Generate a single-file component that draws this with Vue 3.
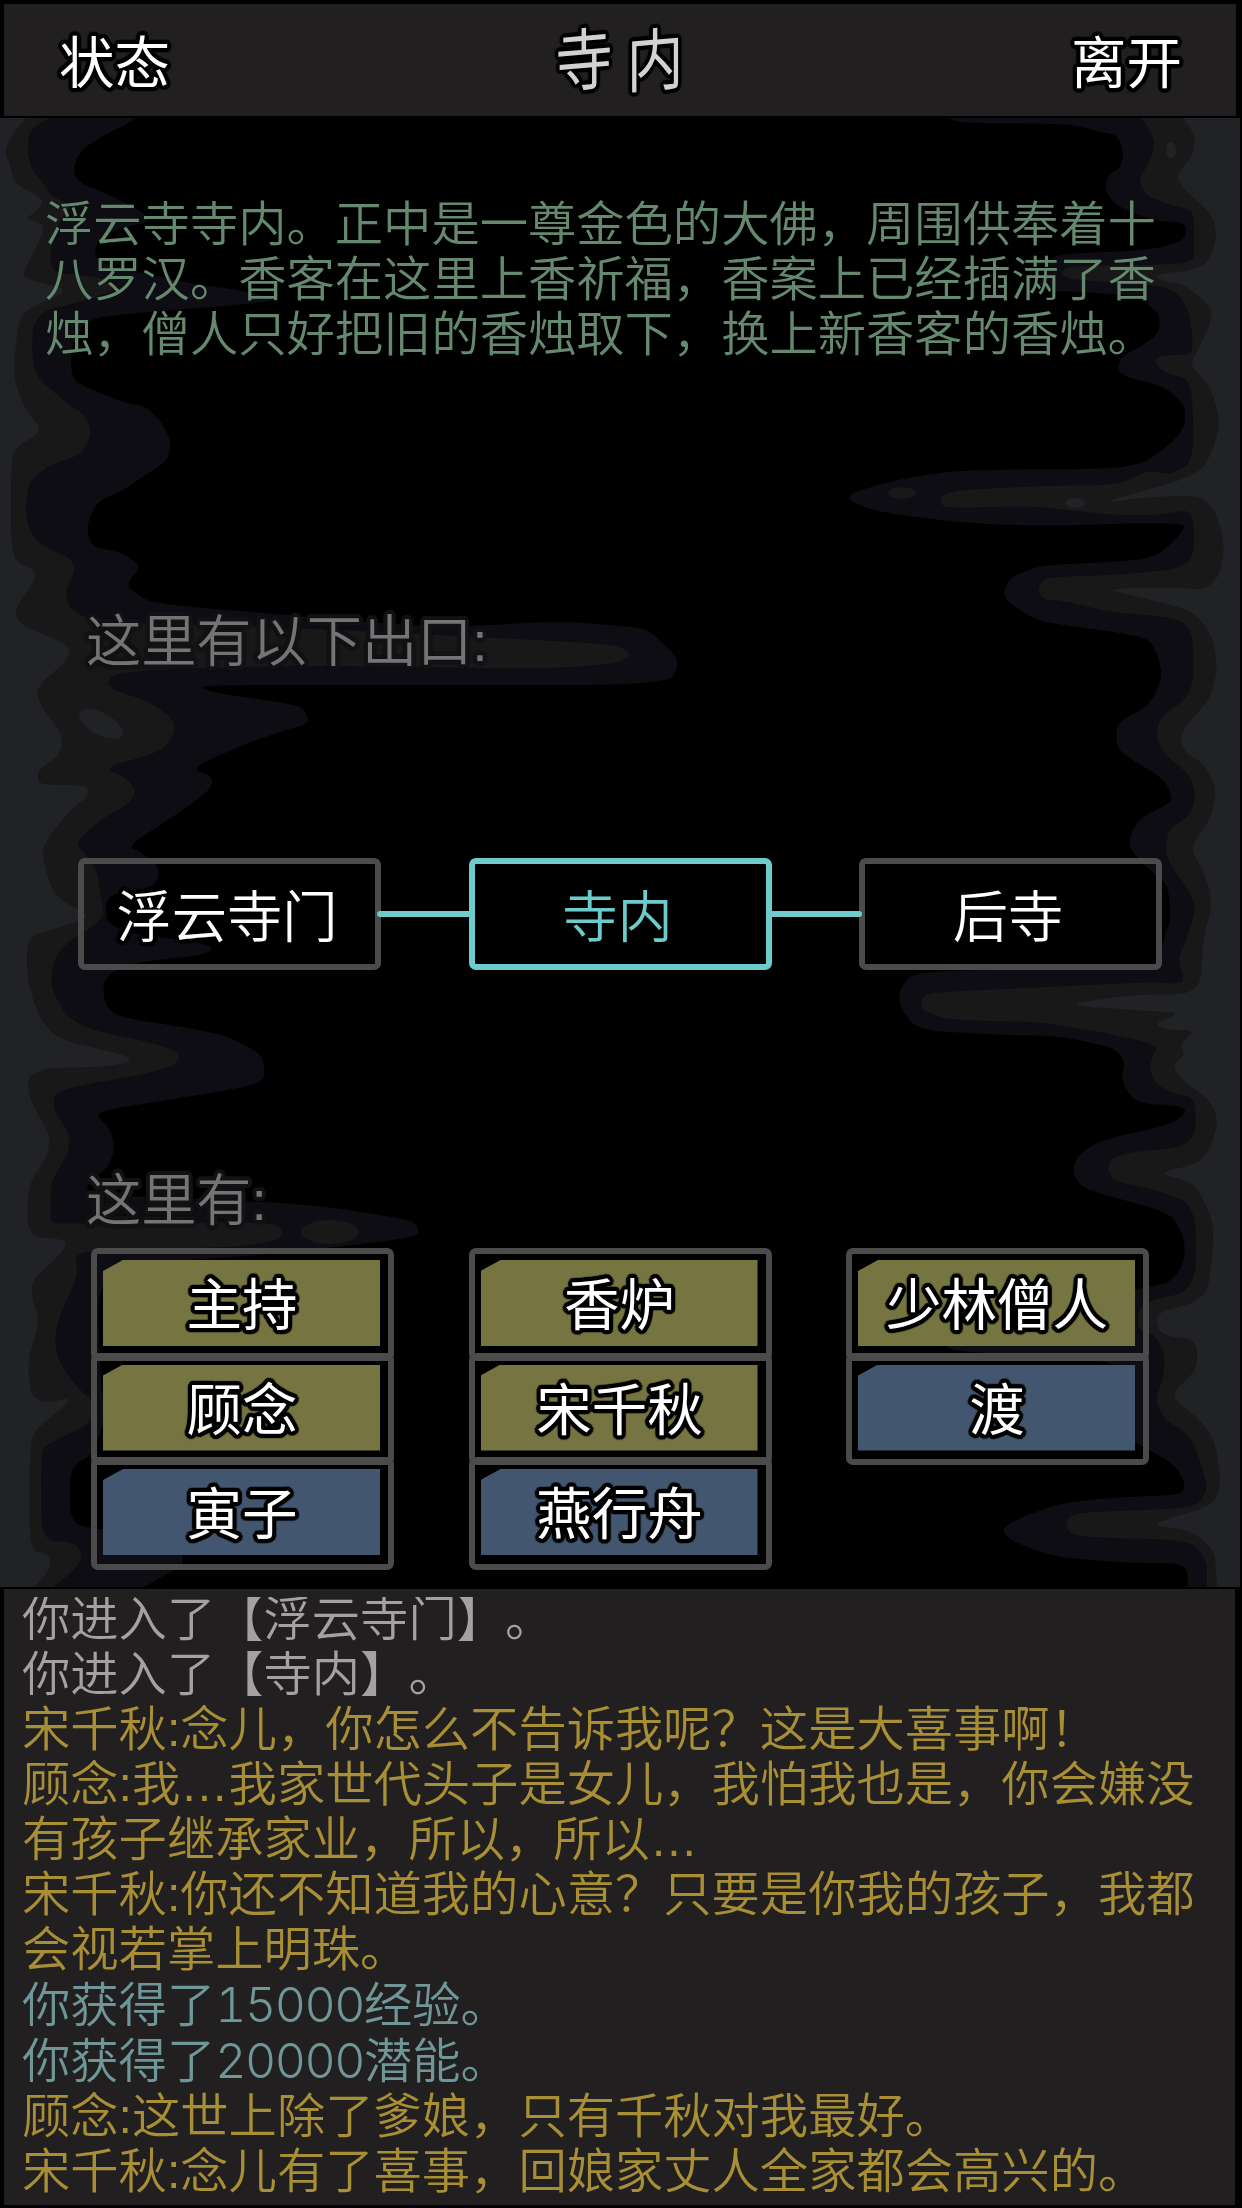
<template>
  <div class="game">
    <header class="topbar">
      <button class="topbar-btn outlined">状态</button>
      <h1 class="topbar-title outlined">
        <span v-for="char in title" :key="char" class="topbar-char">{{ char }}</span>
      </h1>
      <button class="topbar-btn outlined">离开</button>
    </header>

    <main class="scene">
      <svg class="scene-bg" viewBox="0 118 1242 1469" preserveAspectRatio="none">
        <path v-for="(shape, i) in shapes" :key="i" :d="shape.d" :fill="shape.fill" />
        <ellipse cx="330" cy="1232" rx="29" ry="12" fill="#181819" />
        <ellipse cx="101" cy="724" rx="24" ry="11" fill="#202225" transform="rotate(28 101 724)" />
        <ellipse cx="902" cy="493" rx="14" ry="6" fill="#181819" />
        <ellipse cx="1075" cy="503" rx="10" ry="5" fill="#202225" />
        <ellipse cx="1171" cy="150" rx="5" ry="8" fill="#202225" />
      </svg>

      <p class="description">{{ description }}</p>

      <h2 class="label label-exits">这里有以下出口:</h2>
      <nav class="exits">
        <template v-for="(exit, i) in exits" :key="exit.name">
          <span v-if="i > 0" class="link"></span>
          <button class="exit outlined" :class="{ current: exit.current }">{{ exit.name }}</button>
        </template>
      </nav>

      <h2 class="label label-people">这里有:</h2>
      <div class="people">
        <div v-for="(column, i) in people" :key="i" class="column">
          <div v-for="person in column" :key="person.name" class="cell">
            <button class="person" :class="person.type">
              <span class="outlined">{{ person.name }}</span>
            </button>
          </div>
        </div>
      </div>
    </main>

    <section class="log">
      <div class="log-view">
        <p v-for="(line, i) in log" :key="i" class="log-line" :class="line.type">
          {{ line.text }}<span v-if="line.amount" class="amount">{{ line.amount }}</span>{{ line.unit }}
        </p>
      </div>
    </section>
  </div>
</template>

<script setup>
const title = '寺内'

const description =
  '浮云寺寺内。正中是一尊金色的大佛，周围供奉着十八罗汉。香客在这里上香祈福，香案上已经插满了香烛，僧人只好把旧的香烛取下，换上新香客的香烛。'

const exits = [
  { name: '浮云寺门' },
  { name: '寺内', current: true },
  { name: '后寺' }
]

const people = [
  [
    { name: '主持', type: 'npc' },
    { name: '顾念', type: 'npc' },
    { name: '寅子', type: 'player' }
  ],
  [
    { name: '香炉', type: 'npc' },
    { name: '宋千秋', type: 'npc' },
    { name: '燕行舟', type: 'player' }
  ],
  [
    { name: '少林僧人', type: 'npc' },
    { name: '渡', type: 'player' }
  ]
]

const log = [
  { type: 'move', text: '你进入了【浮云寺门】。' },
  { type: 'move', text: '你进入了【寺内】。' },
  { type: 'talk', text: '宋千秋:念儿，你怎么不告诉我呢？这是大喜事啊！' },
  { type: 'talk', text: '顾念:我…我家世代头子是女儿，我怕我也是，你会嫌没有孩子继承家业，所以，所以…' },
  { type: 'talk', text: '宋千秋:你还不知道我的心意？只要是你我的孩子，我都会视若掌上明珠。' },
  { type: 'gain', text: '你获得了', amount: '15000', unit: '经验。' },
  { type: 'gain', text: '你获得了', amount: '20000', unit: '潜能。' },
  { type: 'talk', text: '顾念:这世上除了爹娘，只有千秋对我最好。' },
  { type: 'talk', text: '宋千秋:念儿有了喜事，回娘家丈人全家都会高兴的。' }
]

// Ink edges, listed top to bottom as x,y pairs
const leftOuter =
  '140,118 110,132 80,150 73,170 78,182 110,195 143,212 150,222 120,228 96,240 95,262 150,275 200,285 240,290 280,300 240,305 130,313 85,320 70,350 72,378 85,387 125,403 145,406 160,420 171,440 168,460 150,472 120,492 100,500 90,515 87,530 92,547 120,552 142,566 125,585 145,600 170,605 250,612 440,628 560,621 621,626 648,629 681,661 668,685 400,685 195,685 215,693 300,705 308,716 308,724 260,738 190,768 213,777 210,790 180,812 128,846 140,852 155,862 160,875 152,888 105,895 108,930 215,945 205,955 130,963 108,975 103,985 105,1005 118,1017 220,1033 255,1050 264,1060 264,1084 180,1098 92,1112 110,1128 115,1148 108,1168 90,1180 85,1195 270,1202 330,1207 410,1220 418,1226 418,1237 330,1248 250,1256 160,1262 105,1280 98,1300 100,1370 105,1420 92,1455 74,1465 70,1478 70,1512 76,1525 105,1530 180,1548 184,1565 160,1578 140,1589'
const leftMiddle =
  '52,116 30,130 27,150 32,170 45,185 50,195 72,206 60,220 52,240 50,262 55,273 100,277 122,288 80,302 45,310 33,325 32,350 35,375 60,398 85,415 91,430 88,443 78,456 50,465 30,480 26,500 26,520 35,540 55,552 70,558 76,570 65,590 70,610 95,622 300,628 540,640 617,645 632,655 615,664 540,669 300,665 115,671 105,687 150,702 174,720 174,735 160,752 103,768 125,777 136,790 130,803 100,820 75,843 85,853 97,870 100,895 105,915 89,930 70,940 54,958 50,985 65,1015 90,1030 150,1042 181,1053 175,1065 150,1073 55,1090 53,1110 68,1130 70,1150 55,1175 51,1185 50,1222 60,1224 270,1222 283,1230 280,1240 240,1247 90,1251 75,1255 78,1275 60,1315 54,1340 60,1365 80,1390 92,1400 92,1423 45,1445 41,1455 41,1540 75,1543 83,1555 75,1570 50,1589'
const leftInner =
  '27,116 10,138 5,152 10,165 14,183 45,200 35,213 25,218 45,225 40,240 22,275 30,280 70,290 40,303 20,315 15,350 14,380 25,410 43,431 15,448 11,465 11,560 35,570 35,580 14,610 20,625 70,645 68,660 36,687 40,705 63,735 60,755 38,770 38,785 85,785 90,795 70,810 40,848 50,885 60,900 92,917 60,927 27,937 27,980 40,1020 60,1040 130,1056 128,1063 100,1067 45,1068 27,1078 30,1100 50,1135 48,1155 28,1185 27,1225 35,1237 68,1240 60,1255 32,1280 32,1300 40,1320 28,1360 30,1395 45,1403 75,1397 35,1430 30,1445 29,1550 50,1555 50,1570 32,1589'
const rightOuter =
  '945,117 960,123 1070,124 1095,131 1118,135 1124,155 1120,168 1108,175 1105,190 1115,205 1150,220 1186,223 1186,240 1150,250 1060,254 1050,260 1035,290 1100,293 1140,297 1160,315 1159,333 1140,347 1120,357 1118,372 1130,378 1165,387 1185,405 1185,425 1175,440 1145,463 1110,469 960,470 900,479 850,493 850,502 880,512 960,523 1040,526 1187,522 1180,535 1155,558 1100,563 1040,565 1010,578 1004,590 1005,600 1035,620 1070,626 1115,632 1148,638 1158,655 1162,675 1155,695 1145,708 1118,722 1116,740 1120,752 1165,780 1172,797 1170,803 1140,818 1130,835 1130,850 1150,870 1168,885 1171,920 1163,940 1160,970 915,970 899,990 900,1008 918,1030 1000,1035 1060,1036 1115,1048 1125,1062 1121,1080 1135,1103 1180,1106 1187,1112 1170,1125 1100,1140 1075,1158 1073,1175 1085,1190 1170,1212 1183,1235 1185,1250 1183,1265 1170,1283 1130,1290 1080,1315 940,1345 960,1352 1110,1360 1120,1375 1105,1415 1120,1435 1150,1450 1175,1465 1186,1485 1180,1495 1120,1497 1060,1503 1015,1520 1002,1530 1010,1540 1050,1556 1120,1563 1187,1563 1188,1589'
const rightMiddle =
  '1140,117 1150,130 1155,145 1148,165 1139,178 1145,195 1170,205 1194,210 1194,240 1194,262 1160,265 1070,266 1060,273 1070,280 1160,285 1180,295 1190,315 1193,345 1190,355 1160,355 1154,362 1165,373 1192,380 1194,460 1172,475 1148,470 1120,485 1040,486 960,490 942,495 941,505 950,508 1030,506 1070,510 1110,515 1160,515 1194,509 1194,567 1120,575 1050,577 1040,583 1038,593 1045,600 1060,600 1110,612 1180,618 1193,635 1194,680 1185,700 1160,717 1156,738 1165,755 1190,775 1196,795 1190,815 1168,830 1166,850 1170,865 1185,885 1196,905 1190,930 1178,960 1183,975 1182,984 1150,982 1050,987 940,992 922,996 921,1010 950,1020 1040,1022 1090,1030 1160,1045 1150,1060 1152,1080 1170,1093 1195,1097 1196,1135 1180,1148 1130,1152 1112,1158 1107,1170 1115,1182 1150,1188 1196,1205 1196,1290 1140,1303 1137,1330 1155,1335 1165,1355 1163,1380 1155,1400 1165,1420 1190,1435 1200,1460 1208,1490 1195,1508 1085,1512 1068,1517 1066,1528 1075,1537 1190,1540 1207,1560 1207,1589'
const rightInner =
  '1182,117 1195,135 1193,155 1175,178 1190,195 1213,215 1217,240 1205,268 1155,275 1160,280 1185,285 1213,308 1208,330 1195,355 1190,365 1210,385 1220,420 1215,445 1200,475 1100,503 1140,498 1200,495 1215,510 1225,545 1220,575 1205,590 1170,587 1105,589 1140,597 1190,610 1210,630 1218,665 1210,700 1190,720 1180,738 1185,752 1205,765 1217,790 1210,820 1190,848 1203,870 1213,900 1203,940 1200,994 1130,995 1062,1005 1150,1011 1180,1013 1155,1023 1165,1030 1195,1030 1180,1045 1185,1055 1173,1065 1180,1078 1210,1100 1218,1120 1212,1145 1200,1163 1158,1173 1195,1183 1213,1220 1213,1250 1208,1290 1195,1303 1155,1313 1160,1335 1197,1340 1197,1370 1175,1390 1175,1400 1200,1420 1215,1440 1221,1480 1215,1505 1147,1525 1190,1530 1215,1550 1217,1589'

// Each corner gets a short curve, so the tips keep their reach
function softEdge(points, side) {
  const p = points.split(' ').map((pair) => pair.split(',').map(Number))
  const last = p[p.length - 1]
  const cut = 0.38
  let d = `M${side},116 L${p[0][0]},116`
  for (let i = 1; i < p.length - 1; i++) {
    const [x, y] = p[i]
    const x1 = x + (p[i - 1][0] - x) * cut
    const y1 = y + (p[i - 1][1] - y) * cut
    const x2 = x + (p[i + 1][0] - x) * cut
    const y2 = y + (p[i + 1][1] - y) * cut
    d += ` L${x1},${y1} Q${x},${y} ${x2},${y2}`
  }
  return `${d} L${last[0]},${last[1]} L${side},1589 Z`
}

const shapes = [
  { d: softEdge(leftOuter, 0), fill: '#0e0d13' },
  { d: softEdge(rightOuter, 1240), fill: '#0e0d13' },
  { d: softEdge(leftMiddle, 0), fill: '#181819' },
  { d: softEdge(rightMiddle, 1240), fill: '#181819' },
  { d: softEdge(leftInner, 0), fill: '#202225' },
  { d: softEdge(rightInner, 1240), fill: '#202225' }
]
</script>

<style>
body {
  margin: 0;
  background: #000;
}
</style>

<style scoped>
.game {
  display: flex;
  flex-direction: column;
  width: 1242px;
  height: 2208px;
  overflow: hidden;
  background: #000;
  color: #fff;
  font-family: 'Liberation Sans', 'Noto Sans CJK SC', sans-serif;
  font-weight: 350;
  text-spacing-trim: space-all;
}

button {
  padding: 0;
  border: 0;
  background: none;
  color: inherit;
  font: inherit;
}

h1,
h2,
p {
  margin: 0;
  font-weight: inherit;
}

.outlined,
.label {
  --ring: #000;
  text-shadow:
    4px 0 1px var(--ring),
    3.7px 1.5px 1px var(--ring),
    2.8px 2.8px 1px var(--ring),
    1.5px 3.7px 1px var(--ring),
    0 4px 1px var(--ring),
    -1.5px 3.7px 1px var(--ring),
    -2.8px 2.8px 1px var(--ring),
    -3.7px 1.5px 1px var(--ring),
    -4px 0 1px var(--ring),
    -3.7px -1.5px 1px var(--ring),
    -2.8px -2.8px 1px var(--ring),
    -1.5px -3.7px 1px var(--ring),
    0 -4px 1px var(--ring),
    1.5px -3.7px 1px var(--ring),
    2.8px -2.8px 1px var(--ring),
    3.7px -1.5px 1px var(--ring);
}

.topbar {
  display: flex;
  flex: none;
  align-items: center;
  justify-content: space-between;
  box-sizing: border-box;
  height: 112px;
  margin: 4px 6px 0 4px;
  padding: 7px 54px 0 55px;
  background: #221f20;
}

.topbar-btn {
  font-size: 55.5px;
  font-weight: 400;
  line-height: 60px;
}

.topbar-title {
  display: flex;
  gap: 2px;
  margin: -5px 2px 0 0;
  color: #d2d2d2;
  font-size: 68px;
  font-weight: 400;
  line-height: 70px;
}

.topbar-char {
  transform: scaleX(0.84) skewY(-4deg);
}

.scene {
  position: relative;
  flex: none;
  height: 1473px;
}

.scene-bg {
  position: absolute;
  top: 2px;
  left: 0;
  width: 1242px;
  height: 1469px;
}

.scene > :not(.scene-bg) {
  position: relative;
}

.description {
  width: 1130px;
  padding: 81px 0 0 45px;
  color: #64896f;
  font-size: 48.3px;
  line-height: 55px;
}

.label {
  --ring: #131315;
  padding-left: 86px;
  color: #747474;
  font-size: 55.2px;
  line-height: 60px;
}

.label-exits {
  margin-top: 250px;
}

.label-people {
  margin-top: 201px;
}

.exits {
  display: flex;
  align-items: center;
  margin: 186px 0 0 78px;
}

.exit {
  box-sizing: border-box;
  width: 303px;
  height: 112px;
  padding: 0 5px 2px 0;
  border: 6px solid #4b4b4b;
  border-radius: 7px;
  font-size: 55.3px;
}

.exit.current {
  border-color: #6ecbcb;
  background: #000;
  color: #6ecbcb;
}

.link {
  z-index: 1;
  width: 94.5px;
  height: 6px;
  margin: 0 -3px 0 -4px;
  border-radius: 3px;
  background: #6ecbcb;
}

.people {
  display: flex;
  align-items: flex-start;
  gap: 74.5px;
  margin: 17px 0 0 91px;
}

.column {
  width: 303px;
}

.cell {
  box-sizing: border-box;
  height: 112.5px;
  padding: 6px 8px 8px 6px;
  border: 6px solid #4b4b4b;
  border-radius: 7px;
}

.cell + .cell {
  margin-top: -8px;
}

.person {
  display: flex;
  align-items: center;
  justify-content: center;
  width: 100%;
  height: 86px;
  padding: 6px 0 0 1px;
  box-sizing: border-box;
  clip-path: polygon(0 11px, 20px 0, 100% 0, 100% 100%, 0 100%);
  font-size: 55.5px;
  font-weight: 400;
  line-height: 60px;
}

.person.npc {
  background: rgba(124, 122, 69, 0.95);
}

.person.player {
  background: rgba(71, 91, 117, 0.95);
}

.log {
  flex: none;
  box-sizing: border-box;
  height: 616px;
  margin: 0 7px 0 4px;
  padding: 8px 0 0 18px;
  background: #221f20;
}

.log-view {
  display: flex;
  flex-direction: column;
  justify-content: flex-end;
  width: 1200px;
  height: 602px;
  overflow: hidden;
}

.log-line {
  flex: none;
  font-size: 48.3px;
  line-height: 55px;
}

.move {
  color: #a3a1a2;
}

.talk {
  color: #a88f35;
}

.gain {
  color: #6f9797;
}

.amount {
  font-family: Inter, 'Liberation Sans', sans-serif;
  font-variant-numeric: tabular-nums;
  letter-spacing: -1.5px;
}
</style>
